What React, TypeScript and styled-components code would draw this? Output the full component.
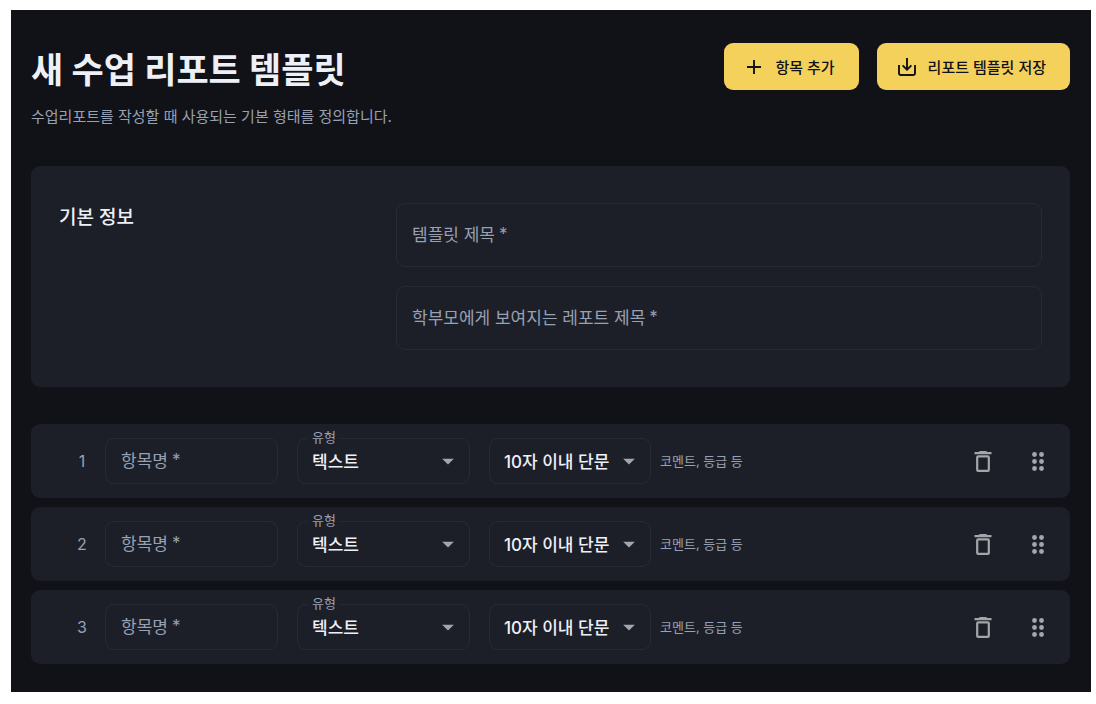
import React from "react";
import styled, { createGlobalStyle } from "styled-components";

const color = {
  page: "#111217",
  panel: "#1d1f28",
  line: "#292b33",
  text: "#edf0f7",
  muted: "#98a1b3",
  icon: "#a5a6a9",
  accent: "#f3d15b",
  ink: "#111217",
};

const GlobalStyle = createGlobalStyle`
  *, *::before, *::after { box-sizing: border-box; }
  body {
    margin: 0;
    background: #ffffff;
    font-family: Inter, "Noto Sans CJK KR", sans-serif;
    color: ${color.text};
  }
  button, input, select { font: inherit; color: inherit; }
`;

const Page = styled.main`
  margin: 10px 5px 12px 11px;
  padding: 33px 21px 28px 20px;
  background: ${color.page};
`;

const Header = styled.header`
  display: flex;
  justify-content: space-between;
  align-items: flex-start;
  margin-bottom: 37px;
`;

const Title = styled.h1`
  margin: 0 0 7px;
  font-size: 35px;
  line-height: 54px;
  font-weight: 700;
`;

const Subtitle = styled.p`
  margin: 0;
  font-size: 15px;
  line-height: 25px;
  color: ${color.muted};
`;

const Actions = styled.div`
  display: flex;
  gap: 18px;
`;

const ActionButton = styled.button`
  display: flex;
  align-items: center;
  gap: 9px;
  height: 47px;
  padding: 0 24px 0 18px;
  border: 0;
  border-radius: 9px;
  background: ${color.accent};
  color: ${color.ink};
  font-size: 15px;
  font-weight: 500;
  cursor: pointer;
`;

const InfoPanel = styled.section`
  display: grid;
  grid-template-columns: 1fr 2fr;
  gap: 14px;
  margin-bottom: 37px;
  padding: 37px 28px;
  border-radius: 9px;
  background: ${color.panel};
`;

const PanelTitle = styled.h2`
  margin: 0;
  font-size: 19px;
  line-height: 29px;
  font-weight: 500;
`;

const FieldStack = styled.div`
  display: grid;
  gap: 19px;
`;

const TextField = styled.label<{ $tall?: boolean; $width?: number }>`
  display: flex;
  align-items: center;
  gap: 8px;
  height: ${(p) => (p.$tall ? 64 : 46)}px;
  width: ${(p) => (p.$width ? `${p.$width}px` : "auto")};
  padding: 0 15px;
  border: 1px solid ${color.line};
  border-radius: 9px;
  font-size: 17px;
  color: ${color.muted};
`;

const FieldName = styled.span`
  display: flex;
  gap: 4px;
  line-height: 24px;
  white-space: nowrap;
`;

const RequiredMark = styled.span`
  line-height: 22px;
`;

const TextInput = styled.input`
  flex: 1;
  min-width: 0;
  padding: 0;
  border: 0;
  outline: 0;
  background: transparent;
  color: ${color.text};
`;

const ItemList = styled.ol`
  display: grid;
  gap: 9px;
  margin: 0;
  padding: 0;
  list-style: none;
`;

const ItemRow = styled.li`
  display: flex;
  align-items: center;
  height: 74px;
  padding: 0 14px 0 28px;
  border-radius: 9px;
  background: ${color.panel};
`;

const RowNumber = styled.span`
  width: 46px;
  text-align: center;
  font-size: 16px;
  color: ${color.muted};
`;

const RowFields = styled.div`
  display: flex;
  gap: 19px;
`;

const SelectBox = styled.div<{ $width: number }>`
  position: relative;
  width: ${(p) => p.$width}px;
  height: 46px;
`;

const FloatingLabel = styled.label`
  position: absolute;
  top: -10px;
  left: 10px;
  padding: 0 5px;
  background: ${color.panel};
  font-size: 13px;
  line-height: 18px;
  color: ${color.muted};
`;

const Select = styled.select`
  appearance: none;
  width: 100%;
  height: 100%;
  padding: 1px 15px 0 14px;
  border: 1px solid ${color.line};
  border-radius: 9px;
  outline: 0;
  background: transparent;
  font-size: 17px;
  font-weight: 500;
`;

const SelectArrow = styled.svg`
  position: absolute;
  top: 9px;
  right: 8px;
  pointer-events: none;
`;

const Hint = styled.span`
  margin-left: 9px;
  padding-bottom: 2px;
  font-size: 13px;
  color: ${color.muted};
`;

const RowTools = styled.div`
  display: flex;
  gap: 18px;
  margin-left: auto;
`;

const IconButton = styled.button`
  display: grid;
  place-items: center;
  width: 37px;
  height: 37px;
  padding: 0;
  border: 0;
  background: transparent;
  color: ${color.icon};
  cursor: pointer;
`;

function Arrow() {
  return (
    <SelectArrow width="28" height="28" viewBox="0 0 24 24" aria-hidden="true">
      <path d="M7 10l5 5 5-5z" fill={color.icon} />
    </SelectArrow>
  );
}

function PlusIcon() {
  return (
    <svg width="24" height="24" viewBox="0 0 24 24" aria-hidden="true">
      <path d="M12 5v14M5 12h14" stroke="currentColor" strokeWidth="1.9" fill="none" />
    </svg>
  );
}

function SaveIcon() {
  return (
    <svg width="24" height="24" viewBox="0 0 24 24" aria-hidden="true">
      <path
        d="M12 3v11.500M7.600 10.300l4.400 4.400 4.400-4.400M4 10v8.300a1.700 1.700 0 0 0 1.700 1.700h12.600a1.700 1.700 0 0 0 1.700-1.700V10"
        stroke="currentColor"
        strokeWidth="1.9"
        fill="none"
      />
    </svg>
  );
}

function TrashIcon() {
  return (
    <svg width="28" height="28" viewBox="0 0 28 28" aria-hidden="true">
      <path d="M5.500 5h4c.6-.7 1.400-1 2.300-1h4.400c.9 0 1.700.3 2.300 1h4v2.200h-17z" fill="currentColor" />
      <rect x="8.200" y="9.300" width="11.600" height="14.600" rx="1" stroke="currentColor" strokeWidth="2.200" fill="none" />
    </svg>
  );
}

function GripIcon() {
  return (
    <svg width="28" height="28" viewBox="0 0 28 28" fill="currentColor" aria-hidden="true">
      {[7.5, 14.5, 21.5].map((y) =>
        [10.5, 17.5].map((x) => <circle key={`${x}-${y}`} cx={x} cy={y} r="2.400" />)
      )}
    </svg>
  );
}

function RequiredField({ name, tall, width }: { name: string; tall?: boolean; width?: number }) {
  return (
    <TextField $tall={tall} $width={width}>
      <FieldName>
        {name}
        <RequiredMark>*</RequiredMark>
      </FieldName>
      <TextInput type="text" required />
    </TextField>
  );
}

function TemplateItem({ index }: { index: number }) {
  return (
    <ItemRow>
      <RowNumber>{index}</RowNumber>
      <RowFields>
        <RequiredField name="항목명" width={173} />
        <SelectBox $width={173}>
          <Select id={`type-${index}`}>
            <option>텍스트</option>
          </Select>
          <FloatingLabel htmlFor={`type-${index}`}>유형</FloatingLabel>
          <Arrow />
        </SelectBox>
        <SelectBox $width={162}>
          <Select aria-label="길이">
            <option>10자 이내 단문</option>
          </Select>
          <Arrow />
        </SelectBox>
      </RowFields>
      <Hint>코멘트, 등급 등</Hint>
      <RowTools>
        <IconButton type="button" aria-label="삭제">
          <TrashIcon />
        </IconButton>
        <IconButton type="button" aria-label="순서 변경">
          <GripIcon />
        </IconButton>
      </RowTools>
    </ItemRow>
  );
}

export default function App() {
  return (
    <>
      <GlobalStyle />
      <Page>
        <Header>
          <div>
            <Title>새 수업 리포트 템플릿</Title>
            <Subtitle>수업리포트를 작성할 때 사용되는 기본 형태를 정의합니다.</Subtitle>
          </div>
          <Actions>
            <ActionButton type="button">
              <PlusIcon />
              항목 추가
            </ActionButton>
            <ActionButton type="button">
              <SaveIcon />
              리포트 템플릿 저장
            </ActionButton>
          </Actions>
        </Header>
        <InfoPanel>
          <PanelTitle>기본 정보</PanelTitle>
          <FieldStack>
            <RequiredField tall name="템플릿 제목" />
            <RequiredField tall name="학부모에게 보여지는 레포트 제목" />
          </FieldStack>
        </InfoPanel>
        <ItemList>
          {[1, 2, 3].map((n) => (
            <TemplateItem key={n} index={n} />
          ))}
        </ItemList>
      </Page>
    </>
  );
}
